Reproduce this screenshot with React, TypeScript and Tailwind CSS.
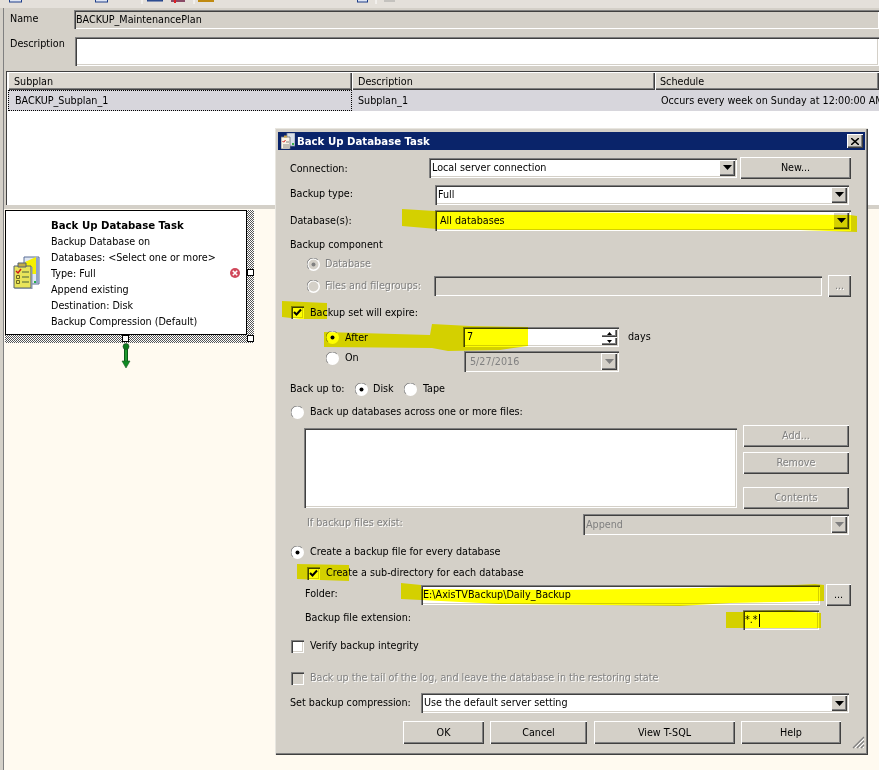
import React from "react";

const sunken =
  "shadow-[inset_1px_1px_0_#808080,inset_2px_2px_0_#404040,inset_-1px_-1px_0_#ffffff,inset_-2px_-2px_0_#d4d0c8]";
const raised =
  "shadow-[inset_1px_1px_0_#ffffff,inset_-1px_-1px_0_#404040,inset_-2px_-2px_0_#808080]";
const disabledText = "text-[#808080] [text-shadow:1px_1px_0_#ffffff]";

function Arrow({ disabled }: { disabled?: boolean }) {
  return (
    <span className={`flex h-full w-[16px] shrink-0 items-center justify-center bg-[#d4d0c8] ${raised}`}>
      <svg width="9" height="5" viewBox="0 0 9 5">
        <path d="M0 0h9L4.5 5z" fill={disabled ? "#808080" : "#000"} />
      </svg>
    </span>
  );
}

function Combo({
  className,
  text,
  disabled,
  white = true,
  textClass = "pl-px",
}: {
  className: string;
  text: string;
  disabled?: boolean;
  white?: boolean;
  textClass?: string;
}) {
  return (
    <div className={`flex items-stretch p-[2px] ${sunken} ${white ? "bg-white" : "bg-[#d4d0c8]"} ${className}`}>
      <span className={`flex flex-1 items-center ${textClass} ${disabled ? "text-[#808080]" : ""}`}>{text}</span>
      <Arrow disabled={disabled} />
    </div>
  );
}

function Button({ className, children, disabled }: { className: string; children: React.ReactNode; disabled?: boolean }) {
  return (
    <div className={`flex items-center justify-center bg-[#d4d0c8] ${raised} ${disabled ? disabledText : ""} ${className}`}>
      {children}
    </div>
  );
}

function Radio({ checked, disabled }: { checked?: boolean; disabled?: boolean }) {
  return (
    <svg width="13" height="13" viewBox="0 0 13 13" className="shrink-0">
      <circle cx="6.5" cy="6.5" r="6.5" fill="#ffffff" />
      <path d="M1.8 10.8A6 6 0 0 1 10.8 1.8" fill="none" stroke="#808080" strokeWidth="1" />
      <circle cx="6.5" cy="6.5" r="5" fill={disabled ? "#d4d0c8" : "#ffffff"} />
      {checked && <circle cx="6.5" cy="6.5" r="2" fill={disabled ? "#808080" : "#000"} />}
    </svg>
  );
}

function Check({ checked, disabled }: { checked?: boolean; disabled?: boolean }) {
  return (
    <span
      className={`flex h-[13px] w-[13px] shrink-0 items-center justify-center ${sunken} ${disabled ? "bg-[#d4d0c8]" : "bg-white"}`}
    >
      {checked && (
        <svg width="9" height="9" viewBox="0 0 9 9">
          <path d="M1 4l2.5 2.5L8 1.5" fill="none" stroke="#000" strokeWidth="2" />
        </svg>
      )}
    </span>
  );
}

function TaskIcon() {
  return (
    <svg width="27" height="33" viewBox="0 0 27 33">
      <path d="M11 1h15v27H11z" fill="#dfe6f2" stroke="#5b6f96" />
      <path d="M12 6l11-5v17H12z" fill="#f5f000" />
      <path d="M23 2h2.5v25H23z" fill="#8fa3c8" />
      <path d="M21 25h2v2h-2z" fill="#22b04a" />
      <path d="M1 10h17v22H1z" fill="#e8e45a" stroke="#55606e" />
      <path d="M18 11h1.5v22H2v-1h16z" fill="#8a96aa" />
      <path d="M5 7h8v4H5z" fill="#c2ac4a" stroke="#55606e" />
      <path d="M3 15l2 2 3-4" fill="none" stroke="#d01818" strokeWidth="1.4" />
      <path d="M9 16h7M9 21h7M9 26h7" stroke="#47603a" />
      <path d="M3.5 19.5h3v3h-3zM3.5 24.5h3v3h-3z" fill="none" stroke="#6e6a20" />
    </svg>
  );
}

function TitleIcon() {
  return (
    <svg width="14" height="16" viewBox="0 0 14 16" className="shrink-0">
      <path d="M6 0h8v13H6z" fill="#d9dfe8" stroke="#7d8aa0" strokeWidth="0.8" />
      <path d="M11 10h2v2h-2z" fill="#36b24a" />
      <path d="M0 4h9v12H0z" fill="#fbf4e6" stroke="#6c7278" strokeWidth="0.8" />
      <path d="M3 2.5h3v2H3z" fill="#c9a24a" />
      <path d="M1.5 8l1.2 1.2L4.5 7" fill="none" stroke="#d01818" />
      <path d="M5 9h3M2 12h6M2 14h6" stroke="#6d6d6d" strokeWidth="0.8" />
    </svg>
  );
}

export default function App() {
  return (
    <div className="relative h-[770px] w-[879px] overflow-hidden bg-[#d4d0c8] font-['DejaVu_Sans_Condensed','DejaVu_Sans',sans-serif] text-[10.7px] leading-[14px] text-black [font-stretch:condensed]">
      {/* cut-off toolbar */}
      <div className="h-[8px] bg-[#e4e0da]">
        <svg width="420" height="8" viewBox="0 0 420 8">
          <g fill="#dfe6f4" stroke="#1e3f8a">
            <rect x="9.5" y="-6" width="12" height="8" />
            <rect x="95.5" y="-6" width="12" height="8" />
            <rect x="147.5" y="-6" width="15" height="7" fill="#3a5a96" />
            <rect x="357.5" y="-6" width="10" height="8" />
          </g>
          <path d="M142 0v4M194 0v4M376 0v4" stroke="#ffffff" />
          <rect x="171" y="0" width="14" height="2" fill="#8a4a66" />
          <rect x="174" y="0" width="2" height="3" fill="#e02020" />
          <rect x="198" y="0" width="16" height="2" fill="#c08a10" />
          <rect x="384" y="0" width="11" height="2" fill="#c4c2be" />
        </svg>
      </div>

      <div className="ml-[3px] h-[762px] border-l border-[#808080]">
        {/* name + description */}
        <div className="flex items-center pt-[2px]">
          <span className="w-[70px] pb-[2px] pl-[6px]">Name</span>
          <div className={`flex h-[19px] flex-1 items-center pl-[2px] pt-px ${sunken}`}>BACKUP_MaintenancePlan</div>
        </div>
        <div className="mt-[8px] flex items-start">
          <span className="w-[71px] pl-[6px]">Description</span>
          <div className={`h-[29px] flex-1 bg-white ${sunken}`} />
        </div>

        {/* subplan table */}
        <div className="ml-[2px] mt-[5px] h-[134px] bg-white pl-[2px] pt-[1px] shadow-[inset_1px_1px_0_#404040,inset_-1px_-1px_0_#ffffff]">
          <div className="grid h-[18px] grid-cols-[344px_303px_1fr]">
            <div className={`flex items-center bg-[#dcd8d0] pl-[6px] pt-px ${raised}`}>Subplan</div>
            <div className={`flex items-center bg-[#dcd8d0] pl-[6px] pt-px ${raised}`}>Description</div>
            <div className={`flex items-center bg-[#dcd8d0] pl-[5px] pt-px ${raised}`}>Schedule</div>
          </div>
          <div className="grid h-[21px] grid-cols-[344px_303px_1fr] bg-[#d7d6dc]">
            <div className="flex items-center border border-dotted border-black pl-[6px] pt-px">BACKUP_Subplan_1</div>
            <div className="flex items-center pl-[6px] pt-px">Subplan_1</div>
            <div className="flex items-center whitespace-nowrap pl-[6px] pt-px">Occurs every week on Sunday at 12:00:00 AM</div>
          </div>
        </div>

        {/* designer surface */}
        <div className="mt-[4px] h-[561px] bg-[#fffaf0] pl-[1px] pt-[1px]">
          <div className="relative h-[133px] w-[249px] bg-[repeating-conic-gradient(#555555_0_25%,#ffffff_0_50%)] bg-size-[2px_2px]">
            <div className="flex h-[125px] w-[242px] items-center border border-black bg-white">
              <div className="w-[45px] shrink-0 pl-[7px]">
                <TaskIcon />
              </div>
              <div className="flex-1 pt-[3px] leading-[16px]">
                <div className="text-[11.3px] font-bold">Back Up Database Task</div>
                <div>Backup Database on</div>
                <div>Databases: &lt;Select one or more&gt;</div>
                <div>Type: Full</div>
                <div>Append existing</div>
                <div>Destination: Disk</div>
                <div>Backup Compression (Default)</div>
              </div>
              <svg width="10" height="10" viewBox="0 0 10 10" className="mr-[6px] shrink-0">
                <circle cx="5" cy="5" r="5" fill="#d0485a" />
                <path d="M2.8 2.8l4.4 4.4M7.2 2.8L2.8 7.2" stroke="#ffffff" strokeWidth="1.6" />
              </svg>
            </div>
            <span className="absolute left-[242px] top-[59px] h-[7px] w-[7px] border border-black bg-white" />
            <span className="absolute left-[117px] top-[125px] h-[7px] w-[7px] border border-black bg-white" />
            <span className="absolute left-[242px] top-[125px] h-[7px] w-[7px] border border-black bg-white" />
          </div>
          <svg width="14" height="26" viewBox="0 0 14 26" className="ml-[114px]">
            <path d="M5 2h4v17h-4z" fill="#0a5a18" />
            <path d="M6 2h2v18H6z" fill="#1f9a2e" />
            <circle cx="7" cy="3.5" r="3" fill="#0c7a1c" stroke="#24422a" strokeWidth="0.6" />
            <path d="M3 18h8l-4 7z" fill="#0f8a22" stroke="#1c5a26" strokeWidth="0.6" />
          </svg>
        </div>
      </div>

      {/* floating dialog */}
      <div className="absolute left-[275px] top-[128px] h-[627px] w-[593px] bg-[#d4d0c8] pl-[3px] pr-[3px] pt-[4px] shadow-[inset_1px_1px_0_#e8e6e0,inset_-1px_-1px_0_#404040,inset_-2px_-2px_0_#808080]">
        <div className="flex h-[18px] items-center bg-[#0a246a] pl-[3px] pr-[2px] text-[11.3px] font-bold text-white">
          <TitleIcon />
          <span className="ml-[2px] flex-1 pt-px">Back Up Database Task</span>
          <span className={`flex h-[14px] w-[16px] items-center justify-center bg-[#d4d0c8] ${raised}`}>
            <svg width="8" height="7" viewBox="0 0 8 7">
              <path d="M0 0l8 7M8 0L0 7" stroke="#000" strokeWidth="1.5" />
            </svg>
          </span>
        </div>

        <div className="relative pl-[12px]">
          <div className="mt-[6px] flex h-[23px] items-center">
            <span className="w-[139px] pt-[2px]">Connection:</span>
            <Combo className="h-[20px] w-[308px]" text="Local server connection" />
            <Button className="ml-[3px] h-[22px] w-[111px]">New...</Button>
          </div>
          <div className="mt-[5px] flex h-[21px] items-center">
            <span className="w-[145px] pb-px">Backup type:</span>
            <Combo className="h-[20px] w-[414px]" text="Full" />
          </div>
          <div className="mt-[5px] flex h-[21px] items-center">
            <span className="w-[145px]">Database(s):</span>
            <Combo className="h-[21px] w-[416px]" text="All databases" textClass="pl-[3px]" />
          </div>
          <div className="mt-[7px] h-[14px]">Backup component</div>
          <div className="mt-[5px] flex h-[14px] items-center pl-[17px]">
            <Radio checked disabled />
            <span className={`ml-[5px] ${disabledText}`}>Database</span>
          </div>
          <div className="mt-[4px] flex h-[22px] items-center pl-[17px]">
            <Radio disabled />
            <span className={`ml-[5px] w-[109px] whitespace-nowrap ${disabledText}`}>Files and filegroups:</span>
            <div className={`h-[20px] w-[388px] ${sunken}`} />
            <Button className="ml-[6px] h-[22px] w-[23px]" disabled>
              ...
            </Button>
          </div>
          <div className="mt-[8px] flex h-[14px] items-center pl-[1px]">
            <Check checked />
            <span className="ml-[6px] pt-[2px]">Backup set will expire:</span>
          </div>
          <div className="mt-[8px] flex h-[20px] items-center pl-[36px]">
            <Radio checked />
            <span className="ml-[6px] w-[118px] pt-[2px]">After</span>
            <div className={`flex h-[20px] w-[156px] items-stretch bg-white p-[2px] ${sunken}`}>
              <span className="flex flex-1 items-center pl-[2px]">7</span>
              <span className="flex w-[16px] flex-col">
                <span className={`flex flex-1 items-center justify-center ${raised}`}>
                  <svg width="5" height="3" viewBox="0 0 5 3"><path d="M0 3h5L2.5 0z" /></svg>
                </span>
                <span className={`flex flex-1 items-center justify-center ${raised}`}>
                  <svg width="5" height="3" viewBox="0 0 5 3"><path d="M0 0h5L2.5 3z" /></svg>
                </span>
              </span>
            </div>
            <span className="ml-[9px] pb-px">days</span>
          </div>
          <div className="mt-[4px] flex h-[21px] items-start pl-[36px]">
            <span className="flex items-center">
              <Radio />
              <span className="ml-[6px] w-[119px]">On</span>
            </span>
            <Combo className="h-[21px] w-[155px]" text="5/27/2016" disabled white={false} textClass="pl-[4px]" />
          </div>
          <div className="mt-[10px] flex h-[14px] items-center">
            <span className="w-[65px] whitespace-nowrap">Back up to:</span>
            <Radio checked />
            <span className="ml-[5px] w-[31px]">Disk</span>
            <Radio />
            <span className="ml-[6px]">Tape</span>
          </div>
          <div className="mt-[9px] flex h-[14px] items-center pl-[1px]">
            <Radio />
            <span className="ml-[6px]">Back up databases across one or more files:</span>
          </div>
          <div className="mt-[6px] flex h-[84px] items-start pl-[14px]">
            <div className={`mt-[3px] h-[80px] w-[433px] bg-white ${sunken}`} />
            <div className="ml-[6px] flex flex-col">
              <Button className="h-[22px] w-[106px]" disabled>
                Add...
              </Button>
              <Button className="mt-[5px] h-[22px] w-[106px]" disabled>
                Remove
              </Button>
              <Button className="mt-[13px] h-[22px] w-[106px]" disabled>
                Contents
              </Button>
            </div>
          </div>
          <div className="mt-[5px] flex h-[21px] items-center pl-[17px]">
            <span className={`w-[276px] pb-[4px] ${disabledText}`}>If backup files exist:</span>
            <Combo className="h-[21px] w-[266px]" text="Append" disabled white={false} />
          </div>
          <div className="mt-[10px] flex h-[14px] items-center pl-px">
            <Radio checked />
            <span className="ml-[6px]">Create a backup file for every database</span>
          </div>
          <div className="mt-[7px] flex h-[14px] items-center pl-[17px]">
            <Check checked />
            <span className="ml-[6px]">Create a sub-directory for each database</span>
          </div>
          <div className="mt-[4px] flex h-[22px] items-center pl-[15px]">
            <span className="w-[116px] pb-[3px]">Folder:</span>
            <div className={`flex h-[20px] w-[399px] items-center bg-white pl-[2px] ${sunken}`}>E:\AxisTVBackup\Daily_Backup</div>
            <Button className="ml-[6px] h-[22px] w-[25px]">...</Button>
          </div>
          <div className="mt-[4px] flex h-[20px] items-start pl-[15px]">
            <span className="w-[438px] pt-px">Backup file extension:</span>
            <div className={`flex h-[20px] w-[76px] items-center bg-white pl-[2px] ${sunken}`}>
              *.*<span className="ml-[1px] h-[13px] w-px bg-black" />
            </div>
          </div>
          <div className="mt-[9px] flex h-[14px] items-center pl-[1px]">
            <Check />
            <span className="ml-[6px]">Verify backup integrity</span>
          </div>
          <div className="mt-[18px] flex h-[14px] items-center pl-[1px]">
            <Check disabled />
            <span className={`ml-[6px] ${disabledText}`}>Back up the tail of the log, and leave the database in the restoring state</span>
          </div>
          <div className="mt-[8px] flex h-[20px] items-center">
            <span className="w-[131px] whitespace-nowrap">Set backup compression:</span>
            <Combo className="h-[20px] w-[428px]" text="Use the default server setting" />
          </div>
          <div className="mt-[8px] flex h-[23px] pl-[113px]">
            <Button className="h-[23px] w-[81px] pt-px">OK</Button>
            <Button className="ml-[6px] h-[23px] w-[97px] pt-px">Cancel</Button>
            <Button className="ml-[7px] h-[23px] w-[141px] pt-px">View T-SQL</Button>
            <Button className="ml-[6px] h-[23px] w-[100px] pt-px">Help</Button>
            <svg width="13" height="13" viewBox="0 0 13 13" className="ml-[11px] mt-[15px] shrink-0">
              <path d="M12 1L1 12M12 5L5 12M12 9L9 12" stroke="#808080" strokeWidth="1.2" />
              <path d="M12 3L3 12M12 7L7 12M12 11L11 12" stroke="#ffffff" />
            </svg>
          </div>
        </div>
      </div>

      {/* highlighter strokes */}
      <svg width="879" height="770" viewBox="0 0 879 770" className="pointer-events-none absolute left-0 top-0 mix-blend-multiply">
        <g fill="#ffff00">
          <polygon points="402,209 435,211 640,213 850,215 857,216 857,232 800,230 650,230 500,230 437,229 402,226" />
          <polygon points="282,301 327,303 327,319 300,319 282,317" />
          <polygon points="324,332 430,335 432,324 470,326 528,327 528,346 500,350 448,351 432,348 324,347" />
          <polygon points="297,564 349,565 349,581 320,580 297,579" />
          <polygon points="401,583 421,585 421,589 560,590 700,588 795,585 815,584 824,585 824,601 780,602 730,603 680,606 600,605 500,604 421,600 401,599" />
          <polygon points="726,612 743,612 743,611 790,610 821,613 821,628 790,628 743,628 726,628" />
        </g>
      </svg>
    </div>
  );
}
